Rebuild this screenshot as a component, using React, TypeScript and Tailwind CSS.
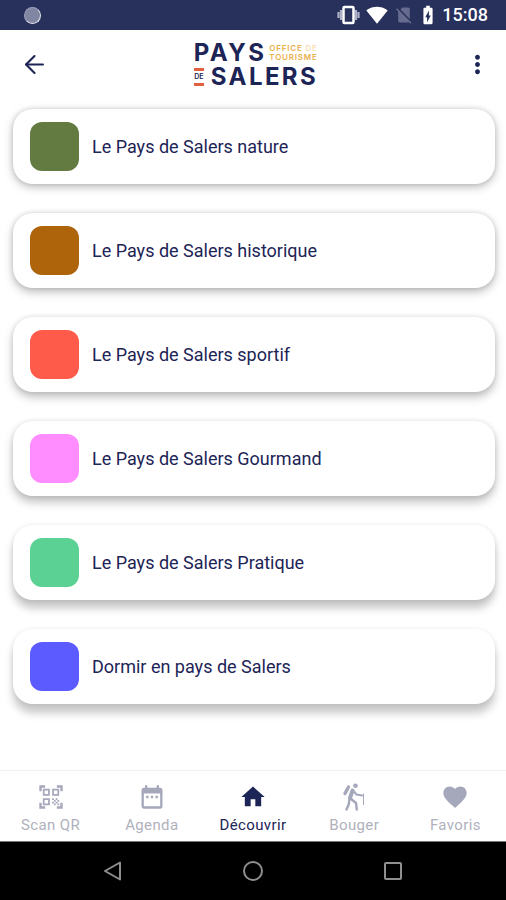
import type { ReactNode } from "react";
import { ArrowLeft } from "lucide-react";
import {
  MdBatteryChargingFull,
  MdDateRange,
  MdFavorite,
  MdHome,
  MdMoreVert,
  MdNoSim,
  MdQrCodeScanner,
  MdSignalWifi4Bar,
} from "react-icons/md";

type Category = { label: string; swatch: string; shadow: string };

// Elevation deepens towards the bottom of the screen, as Android's light source does.
const categories: Category[] = [
  { label: "Le Pays de Salers nature", swatch: "bg-[#637b41]", shadow: "shadow-[0_3px_10px_rgba(0,0,0,0.26),0_0_5px_rgba(0,0,0,0.12)]" },
  { label: "Le Pays de Salers historique", swatch: "bg-[#ad640b]", shadow: "shadow-[0_4px_10px_rgba(0,0,0,0.26),0_0_5px_rgba(0,0,0,0.12)]" },
  { label: "Le Pays de Salers sportif", swatch: "bg-[#ff5b4b]", shadow: "shadow-[0_5px_10px_rgba(0,0,0,0.25),0_0_5px_rgba(0,0,0,0.11)]" },
  { label: "Le Pays de Salers Gourmand", swatch: "bg-[#ff8dff]", shadow: "shadow-[0_6px_10px_rgba(0,0,0,0.25),0_0_5px_rgba(0,0,0,0.10)]" },
  { label: "Le Pays de Salers Pratique", swatch: "bg-[#5bd194]", shadow: "shadow-[0_8px_9px_rgba(0,0,0,0.23),0_0_5px_rgba(0,0,0,0.09)]" },
  { label: "Dormir en pays de Salers", swatch: "bg-[#5c5bff]", shadow: "shadow-[0_9px_9px_rgba(0,0,0,0.22),0_0_5px_rgba(0,0,0,0.08)]" },
];

function HikerIcon() {
  return (
    <svg width="28" height="28" viewBox="0 0 28 28" fill="none" stroke="currentColor" strokeLinecap="round" strokeLinejoin="round" aria-hidden="true">
      <circle cx="15.500" cy="2.800" r="2.300" fill="currentColor" stroke="none" />
      <path d="M8.500 4L5 10.500" strokeWidth="3.400" />
      <path d="M12.500 7.500L10 15" strokeWidth="4" />
      <path d="M13 7.500l3.500 4 5.500 1" strokeWidth="2" />
      <path d="M10.500 15.500l5.500 4.500.8 6.500" strokeWidth="2.400" />
      <path d="M9.500 16l-.8 5.500L6.500 26.500" strokeWidth="2.400" />
      <path d="M23.500 11v10.500" strokeWidth="1" />
    </svg>
  );
}

type Tab = { label: string; icon: ReactNode; active?: boolean };

const tabs: Tab[] = [
  { label: "Scan QR", icon: <MdQrCodeScanner size={28} /> },
  { label: "Agenda", icon: <MdDateRange size={28} /> },
  { label: "Découvrir", icon: <MdHome size={28} />, active: true },
  { label: "Bouger", icon: <HikerIcon /> },
  { label: "Favoris", icon: <MdFavorite size={28} /> },
];

function StatusBar() {
  return (
    <div className="flex h-[30px] items-center justify-between bg-[#28305c] pr-[18px] pl-6 text-white">
      <span className="size-[17px] rounded-full border border-[#9a9fb9] border-r-[#e4e6ee] border-b-[#e4e6ee] bg-[#8186a3]" />
      <div className="flex items-center">
        <svg width="23" height="20" viewBox="0 0 23 20" fill="none" aria-hidden="true">
          <path d="M1.500 7v6M4 5v10M19 5v10M21.500 7v6" stroke="#aeb1c5" strokeWidth="2.200" />
          <rect x="6.500" y="2" width="10" height="16" rx="1" stroke="#fff" strokeWidth="2.500" />
        </svg>
        <MdSignalWifi4Bar size={22} className="ml-1.5" />
        <MdNoSim size={20} className="ml-1.5 text-[#666c8f]" />
        <MdBatteryChargingFull size={22} className="ml-[3px]" />
        <span className="ml-[3px] text-lg leading-none font-medium">15:08</span>
      </div>
    </div>
  );
}

function Logo() {
  return (
    <div className="flex flex-col font-[Inter,sans-serif] text-[#1d2456]" aria-label="Office de tourisme Pays de Salers">
      <div className="flex items-center gap-[3px]">
        <span className="text-2xl leading-6 font-bold tracking-widest">PAYS</span>
        <span className="flex flex-col gap-px text-[8px] leading-2 font-semibold tracking-widest text-[#e9b04d]">
          <span>
            OFFICE <span className="text-[#f6dfb6]">DE</span>
          </span>
          <span>TOURISME</span>
        </span>
      </div>
      <div className="flex items-center gap-[7px]">
        <span className="flex w-[10px] flex-col items-center border-y-3 border-[#e2603f] py-[2px] text-[7px] leading-[8px] font-semibold">
          DE
        </span>
        <span className="text-2xl leading-6 font-bold tracking-widest">SALERS</span>
      </div>
    </div>
  );
}

function Header() {
  return (
    <header className="flex h-[69px] items-center justify-between pr-[14px] pl-5 text-[#1d2456]">
      <button type="button" aria-label="Retour">
        <ArrowLeft size={29} strokeWidth={1.75} />
      </button>
      <Logo />
      <button type="button" aria-label="Plus d'options">
        <MdMoreVert size={29} />
      </button>
    </header>
  );
}

export default function App() {
  return (
    <div className="flex min-h-screen flex-col bg-white font-[Roboto,sans-serif]">
      <StatusBar />
      <Header />
      <main className="flex flex-1 flex-col gap-[29px] pt-[10px] pr-[11px] pb-6 pl-[13px]">
        {categories.map((c) => (
          <button
            key={c.label}
            type="button"
            className={`flex h-[75px] w-full items-center gap-[13px] rounded-[20px] bg-white px-[17px] text-left text-lg text-[#1d2456] ${c.shadow}`}
          >
            <span className={`size-[49px] rounded-xl ${c.swatch}`} />
            {c.label}
          </button>
        ))}
      </main>
      <nav className="grid h-[71px] grid-cols-5 border-t border-[#f1f1f3] bg-white">
        {tabs.map((t) => (
          <a
            key={t.label}
            href="#"
            aria-current={t.active ? "page" : undefined}
            className={`flex flex-col items-center gap-1 pt-3 text-[15px] leading-5 tracking-wide ${
              t.active ? "text-[#1d2456]" : "text-[#a5a7bb]"
            }`}
          >
            {t.icon}
            <span className={t.active ? "" : "text-[#b0b1bc]"}>{t.label}</span>
          </a>
        ))}
      </nav>
      <div className="flex h-[59px] items-center justify-center gap-[120px] border-t border-[#777777] bg-black text-[#8f8f8f]">
        <button type="button" aria-label="Précédent">
          <svg width="20" height="20" viewBox="0 0 20 20" fill="none" stroke="currentColor" strokeWidth="2" strokeLinejoin="round">
            <path d="M17 1.500v17L2 10z" />
          </svg>
        </button>
        <button type="button" aria-label="Accueil">
          <svg width="20" height="20" viewBox="0 0 20 20" fill="none" stroke="currentColor" strokeWidth="2">
            <circle cx="10" cy="10" r="9" />
          </svg>
        </button>
        <button type="button" aria-label="Applications récentes">
          <svg width="20" height="20" viewBox="0 0 20 20" fill="none" stroke="currentColor" strokeWidth="2">
            <rect x="2" y="2" width="16" height="16" rx="1" />
          </svg>
        </button>
      </div>
    </div>
  );
}
